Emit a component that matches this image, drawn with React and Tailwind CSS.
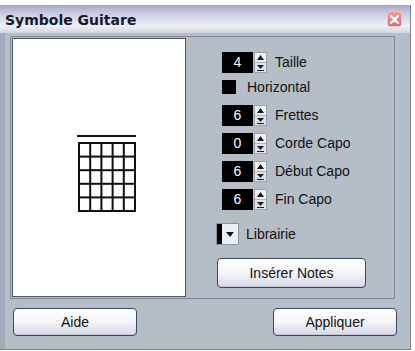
import React from 'react';

const font = { fontFamily: '"Liberation Sans", Arial, sans-serif' };

const Arrows = () => (
    <div className="w-[13px] h-[21px] flex flex-col bg-[#dfe3e8] border border-[#9aa2ac]">
        <div className="flex-1 flex items-center justify-center border-b border-[#aab2bc] bg-[#eef0f3]">
            <svg width="7" height="5" viewBox="0 0 7 5"><path d="M3.5 0 L7 5 L0 5 Z" fill="#1c1c1c" /></svg>
        </div>
        <div className="flex-1 flex flex-col items-center justify-center">
            <svg width="7" height="6" viewBox="0 0 7 6"><path d="M0 0 L7 0 L3.5 4 Z" fill="#1c1c1c" /><rect x="0" y="5" width="7" height="1" fill="#1c1c1c" /></svg>
        </div>
    </div>
);

const Spin = ({ value, label }) => (
    <div className="flex items-center h-[21px] pl-[36px]">
        <div className="w-[31px] h-[21px] bg-black text-white text-[14px] flex items-center justify-center">{value}</div>
        <div className="ml-[1px]"><Arrows /></div>
        <span className="ml-[8px] text-[14px] text-[#111]">{label}</span>
    </div>
);

const Button = ({ children, className }) => (
    <button className={`h-[28px] rounded-[4px] border border-[#3a4866] bg-gradient-to-b from-white via-[#f4f4f8] to-[#d6d8e4] text-[14px] text-[#111] shadow-[inset_0_-1px_0_#c0c4d4] ${className}`}>
        {children}
    </button>
);

const ChordGrid = () => (
    <svg width="62" height="80" viewBox="0 0 62 80">
        <rect x="1" y="0" width="59" height="2" fill="#111" />
        {[0, 1, 2, 3, 4, 5].map((i) => (
            <rect key={'v' + i} x={2 + i * 11.2} y="7" width="2" height="70" fill="#111" />
        ))}
        {[0, 1, 2, 3, 4, 5].map((i) => (
            <rect key={'h' + i} x="2" y={7 + i * 13.6} width="58" height="2" fill="#111" />
        ))}
    </svg>
);

export default function App() {
    return (
        <div className="w-[415px] h-[351px] bg-white pt-[5px]" style={font}>
            <div className="w-[411px] h-[345px] bg-[#b5bdc6] border-r border-b border-[#7d8594] flex flex-col">
                <div className="h-[28px] flex items-center justify-between pl-[5px] pr-[8px] bg-[linear-gradient(to_bottom,#a6a8c6,#cfd0e2_35%,#eeeff7_75%,#d2d5e0)]">
                    <span className="text-[14px] font-bold text-[#141a2c] mt-[2px]" style={{ fontFamily: '"DejaVu Sans", Verdana, sans-serif' }}>Symbole Guitare</span>
                    <div className="w-[15px] h-[16px] rounded-[3px] border border-[#f3c0c0] bg-gradient-to-b from-[#f09a9a] to-[#dc6a6a] flex items-center justify-center">
                        <svg width="9" height="9" viewBox="0 0 9 9"><path d="M1 1 L8 8 M8 1 L1 8" stroke="white" strokeWidth="2.2" strokeLinecap="round" /></svg>
                    </div>
                </div>
                <div className="flex-1 flex flex-col border-l-[5px] border-[#a3abba] pl-[5px] pt-[3px]">
                    <div className="w-[385px] h-[263px] border border-[#808896] p-[1px] flex">
                        <div className="w-[174px] h-full border border-[#4e5660] bg-white flex items-start justify-center pt-[96px]">
                            <div className="ml-[16px]"><ChordGrid /></div>
                        </div>
                        <div className="flex-1 flex flex-col pt-[14px]">
                            <Spin value="4" label="Taille" />
                            <div className="flex items-center mt-[7px] pl-[36px] h-[14px]">
                                <div className="w-[14px] h-[14px] bg-black" />
                                <span className="ml-[11px] text-[14px] text-[#111]">Horizontal</span>
                            </div>
                            <div className="flex flex-col gap-[7px] mt-[11px]">
                                <Spin value="6" label="Frettes" />
                                <Spin value="0" label="Corde Capo" />
                                <Spin value="6" label="Début Capo" />
                                <Spin value="6" label="Fin Capo" />
                            </div>
                            <div className="flex items-center mt-[13px] pl-[30px]">
                                <div className="w-[23px] h-[22px] flex border border-[#8c949e]">
                                    <div className="w-[5px] bg-black" />
                                    <div className="flex-1 bg-[#eceef1] flex items-center justify-center">
                                        <svg width="8" height="5" viewBox="0 0 8 5"><path d="M0 0 L8 0 L4 5 Z" fill="#111" /></svg>
                                    </div>
                                </div>
                                <span className="ml-[7px] text-[14px] text-[#111]">Librairie</span>
                            </div>
                            <Button className="ml-[31px] mt-[13px] w-[149px] h-[30px]">Insérer Notes</Button>
                        </div>
                    </div>
                    <div className="flex justify-between w-[387px] mt-[9px] pl-[3px]">
                        <Button className="w-[124px]">Aide</Button>
                        <Button className="w-[124px]">Appliquer</Button>
                    </div>
                </div>
            </div>
        </div>
    );
}
